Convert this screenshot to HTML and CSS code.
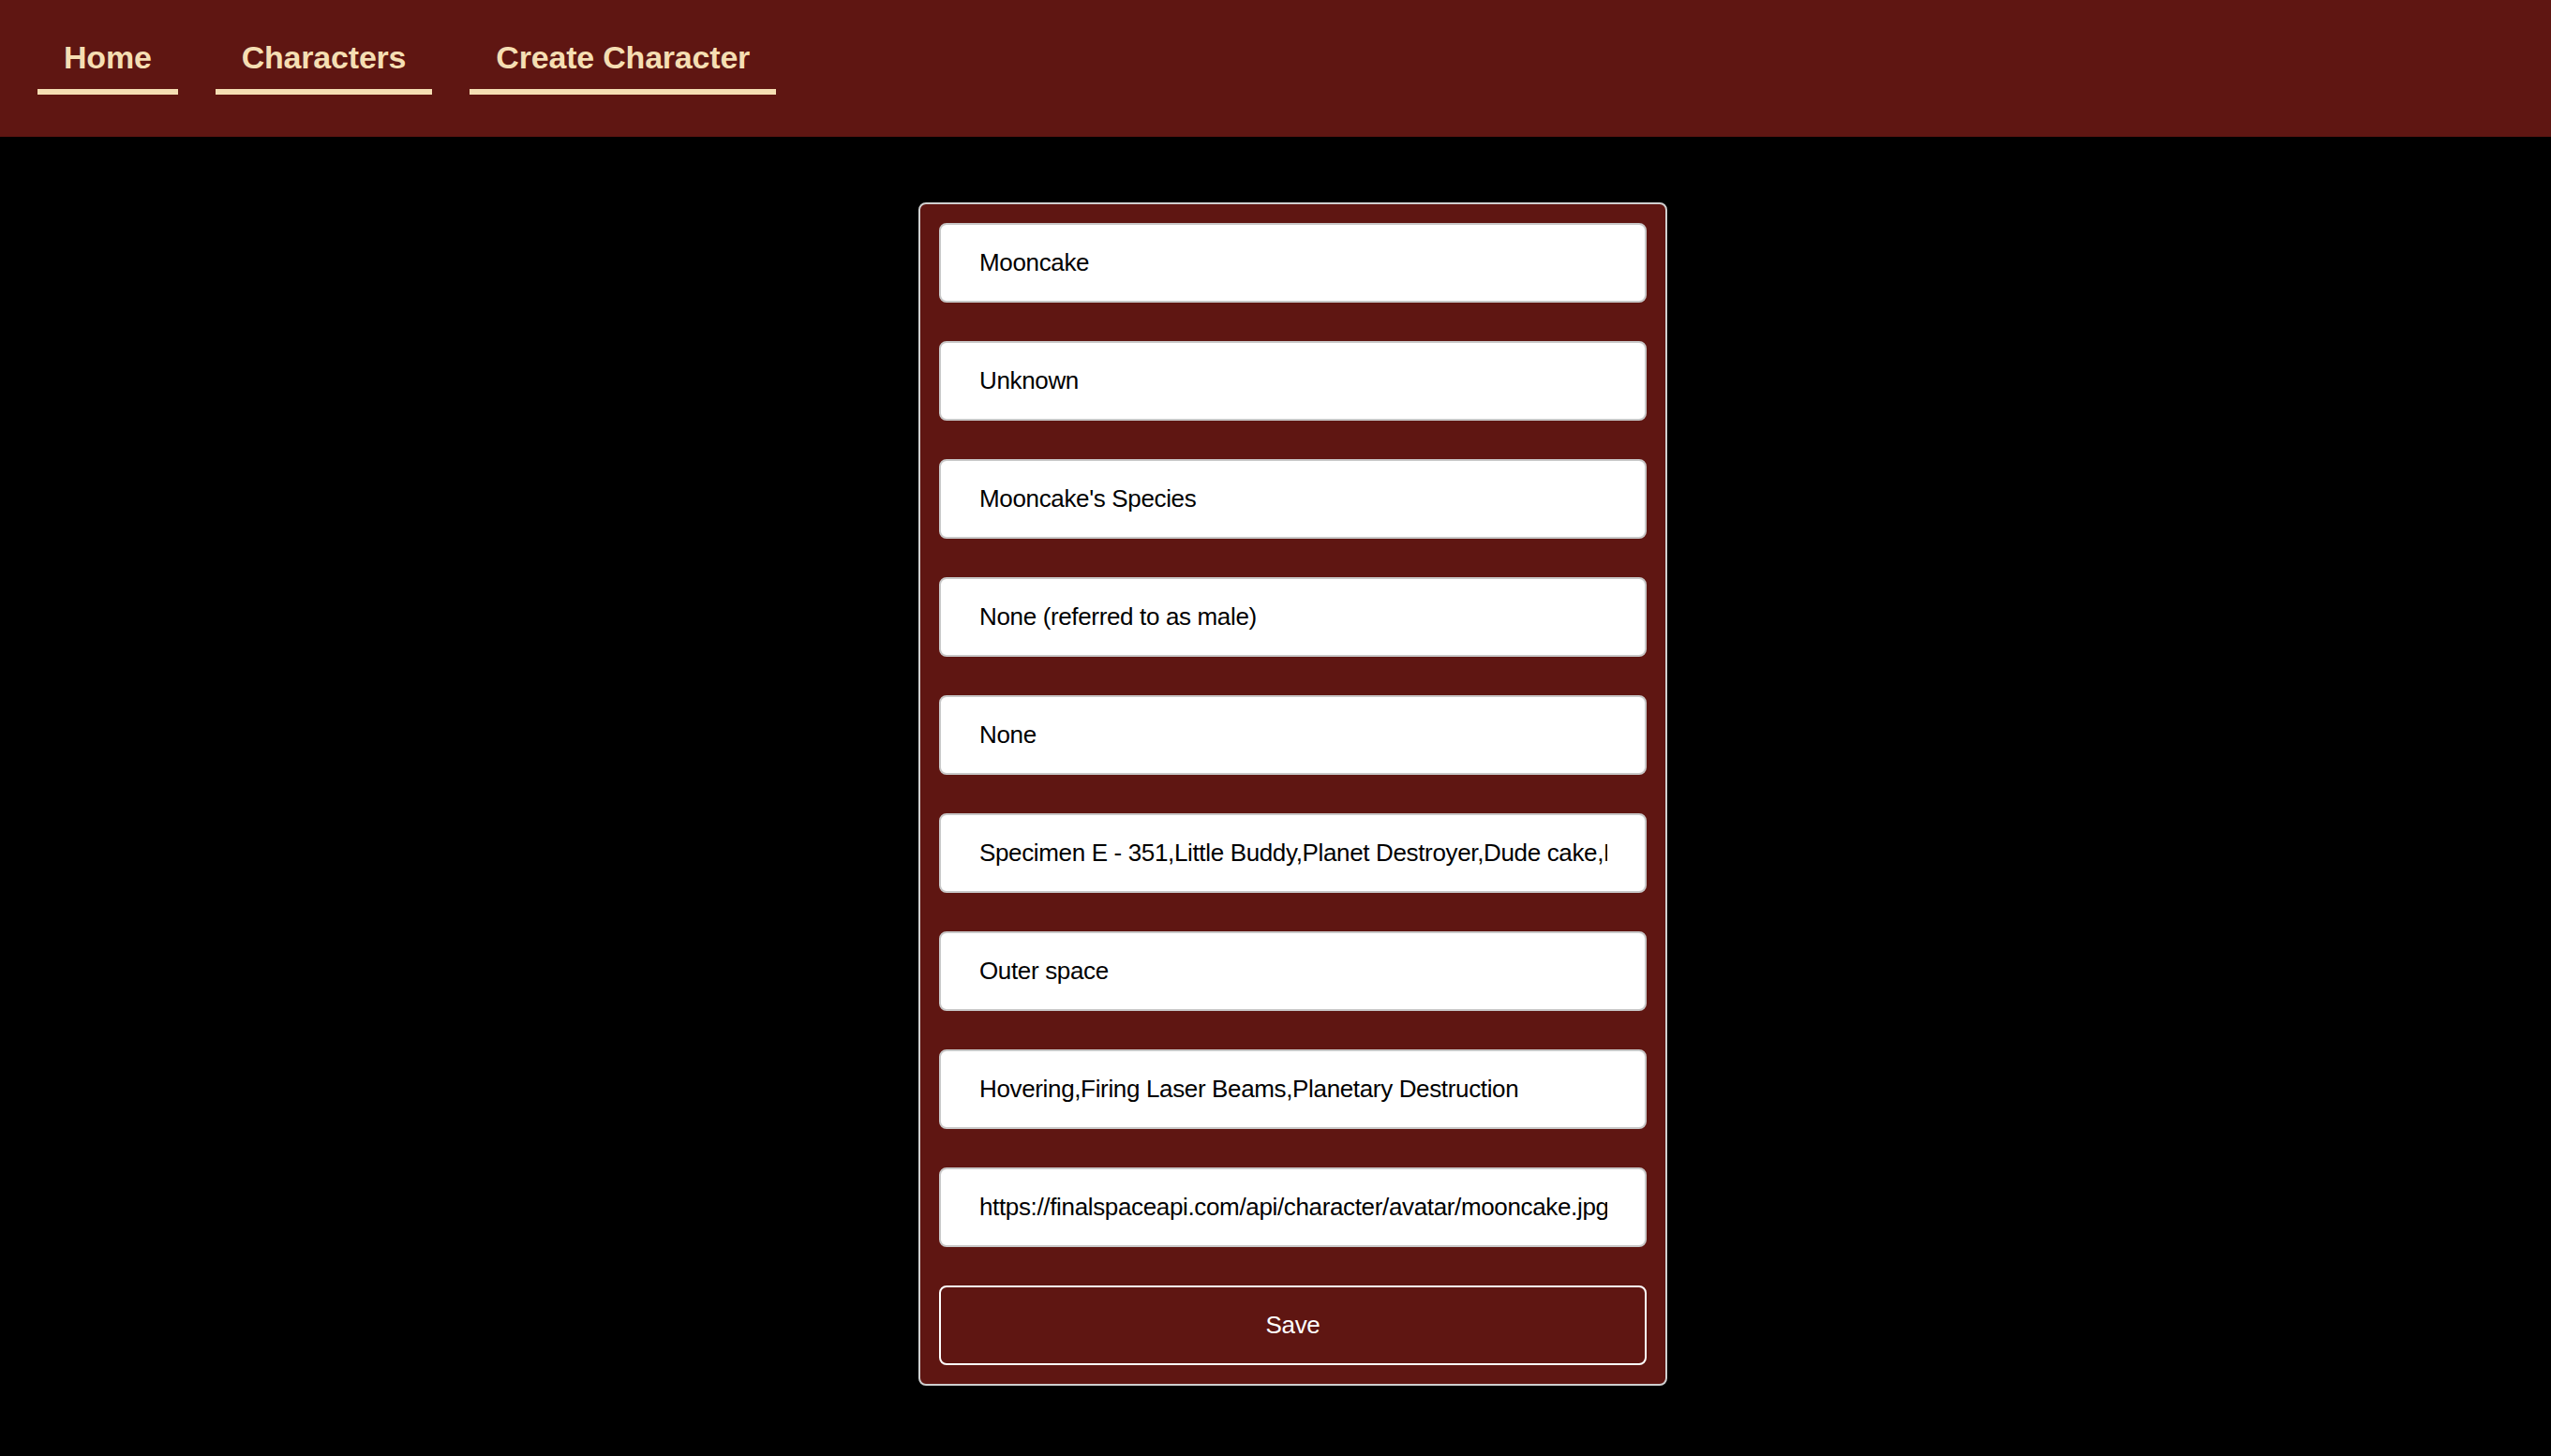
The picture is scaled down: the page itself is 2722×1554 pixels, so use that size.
FILE: index.html
```html
<!DOCTYPE html>
<html lang="en">
<head>
<meta charset="utf-8">
<title>Create Character</title>
<link rel="stylesheet" href="styles.css">
</head>
<body>
<nav class="nav">
  <a class="nav-link" href="#">Home</a>
  <a class="nav-link" href="#">Characters</a>
  <a class="nav-link" href="#">Create Character</a>
</nav>
<main class="main">
  <form class="card">
    <input class="field" type="text" value="Mooncake">
    <input class="field" type="text" value="Unknown">
    <input class="field" type="text" value="Mooncake's Species">
    <input class="field" type="text" value="None (referred to as male)">
    <input class="field" type="text" value="None">
    <input class="field" type="text" value="Specimen E - 351,Little Buddy,Planet Destroyer,Dude cake,Lord of the Universe">
    <input class="field" type="text" value="Outer space">
    <input class="field" type="text" value="Hovering,Firing Laser Beams,Planetary Destruction">
    <input class="field" type="text" value="https://finalspaceapi.com/api/character/avatar/mooncake.jpg">
    <button class="save" type="button">Save</button>
  </form>
</main>
</body>
</html>
```
FILE: styles.css
```css
html, body {
  margin: 0;
  padding: 0;
  background: #000;
}
body {
  font-family: "Liberation Sans", Arial, sans-serif;
}
.nav {
  background: #5f1612;
  display: flex;
  gap: 40px;
  padding: 38px 40px 45px;
}
.nav-link {
  display: block;
  font-family: "Liberation Sans", Arial, sans-serif;
  font-weight: bold;
  font-size: 34px;
  line-height: 46px;
  letter-spacing: -0.2px;
  color: #f5deb3;
  text-decoration: none;
  padding: 0 28px 11px;
  border-bottom: 6px solid #f5deb3;
}
.main {
  display: flex;
  justify-content: center;
  padding: 70px 0 0 37px;
}
.card {
  box-sizing: border-box;
  width: 799px;
  background: #5f1612;
  border: 2px solid #cfcfcf;
  border-radius: 8px;
  padding: 20px;
  display: flex;
  flex-direction: column;
  gap: 41px;
}
.field {
  box-sizing: border-box;
  width: 100%;
  height: 85px;
  margin: 0;
  padding: 0 40px 0 41px;
  background: #fff;
  border: 2px solid #c8c8c8;
  border-radius: 8px;
  font-family: "Liberation Sans", Arial, sans-serif;
  font-size: 26px;
  letter-spacing: -0.35px;
  color: #000;
  outline: none;
}
.save {
  box-sizing: border-box;
  width: 100%;
  height: 85px;
  margin: 0;
  background: #5f1612;
  border: 2px solid #fff;
  border-radius: 8px;
  font-family: "Liberation Sans", Arial, sans-serif;
  font-size: 26px;
  letter-spacing: -0.3px;
  color: #fff;
  cursor: pointer;
}
```
